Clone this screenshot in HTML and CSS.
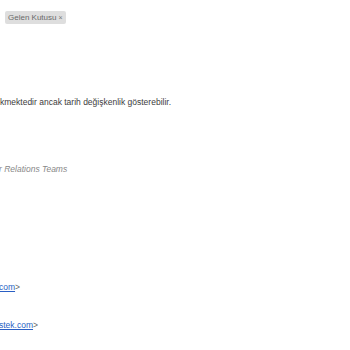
FILE: index.html
```html
<!DOCTYPE html>
<html lang="tr">
<head>
<meta charset="utf-8">
<link rel="stylesheet" href="styles.css">
</head>
<body>
<div class="page">
  <div class="labels"><span class="chip">Gelen Kutusu <span class="x">×</span></span></div>
  <p class="body-text">kmektedir ancak tarih değişkenlik gösterebilir.</p>
  <p class="sig">r Relations Teams</p>
  <p class="mail first"><a href="#">com</a><span class="gt">&gt;</span></p>
  <p class="mail second"><a href="#">stek.com</a><span class="gt">&gt;</span></p>
</div>
</body>
</html>
```
FILE: styles.css
```css
html, body {
  margin: 0;
  padding: 0;
  background: #fff;
}
body {
  font-family: "Liberation Sans", Arial, sans-serif;
  font-size: 8.5px;
  line-height: 11px;
  color: #3c3c3c;
  overflow: hidden;
}
.page {
  display: flex;
  flex-direction: column;
}
.labels {
  display: flex;
  padding: 11px 0 0 5px;
}
.chip {
  display: inline-flex;
  align-items: center;
  height: 13px;
  padding: 0 3px 0 3px;
  background: #dedede;
  color: #6a6a6a;
  font-size: 8px;
  border-radius: 2px;
}
.chip .x {
  margin-left: 2px;
  font-size: 7px;
  color: #777;
}
p {
  margin: 0;
  white-space: nowrap;
}
.body-text {
  margin-top: 73px;
}
.sig {
  margin-top: 56px;
  margin-left: -1px;
  font-style: italic;
  color: #888;
}
.mail a {
  color: #2a5fc4;
  text-decoration: underline;
}
.mail .gt {
  color: #666;
}
.mail.first {
  margin-top: 107px;
  margin-left: -1px;
}
.mail.second {
  margin-top: 27px;
  margin-left: -1px;
}
```
